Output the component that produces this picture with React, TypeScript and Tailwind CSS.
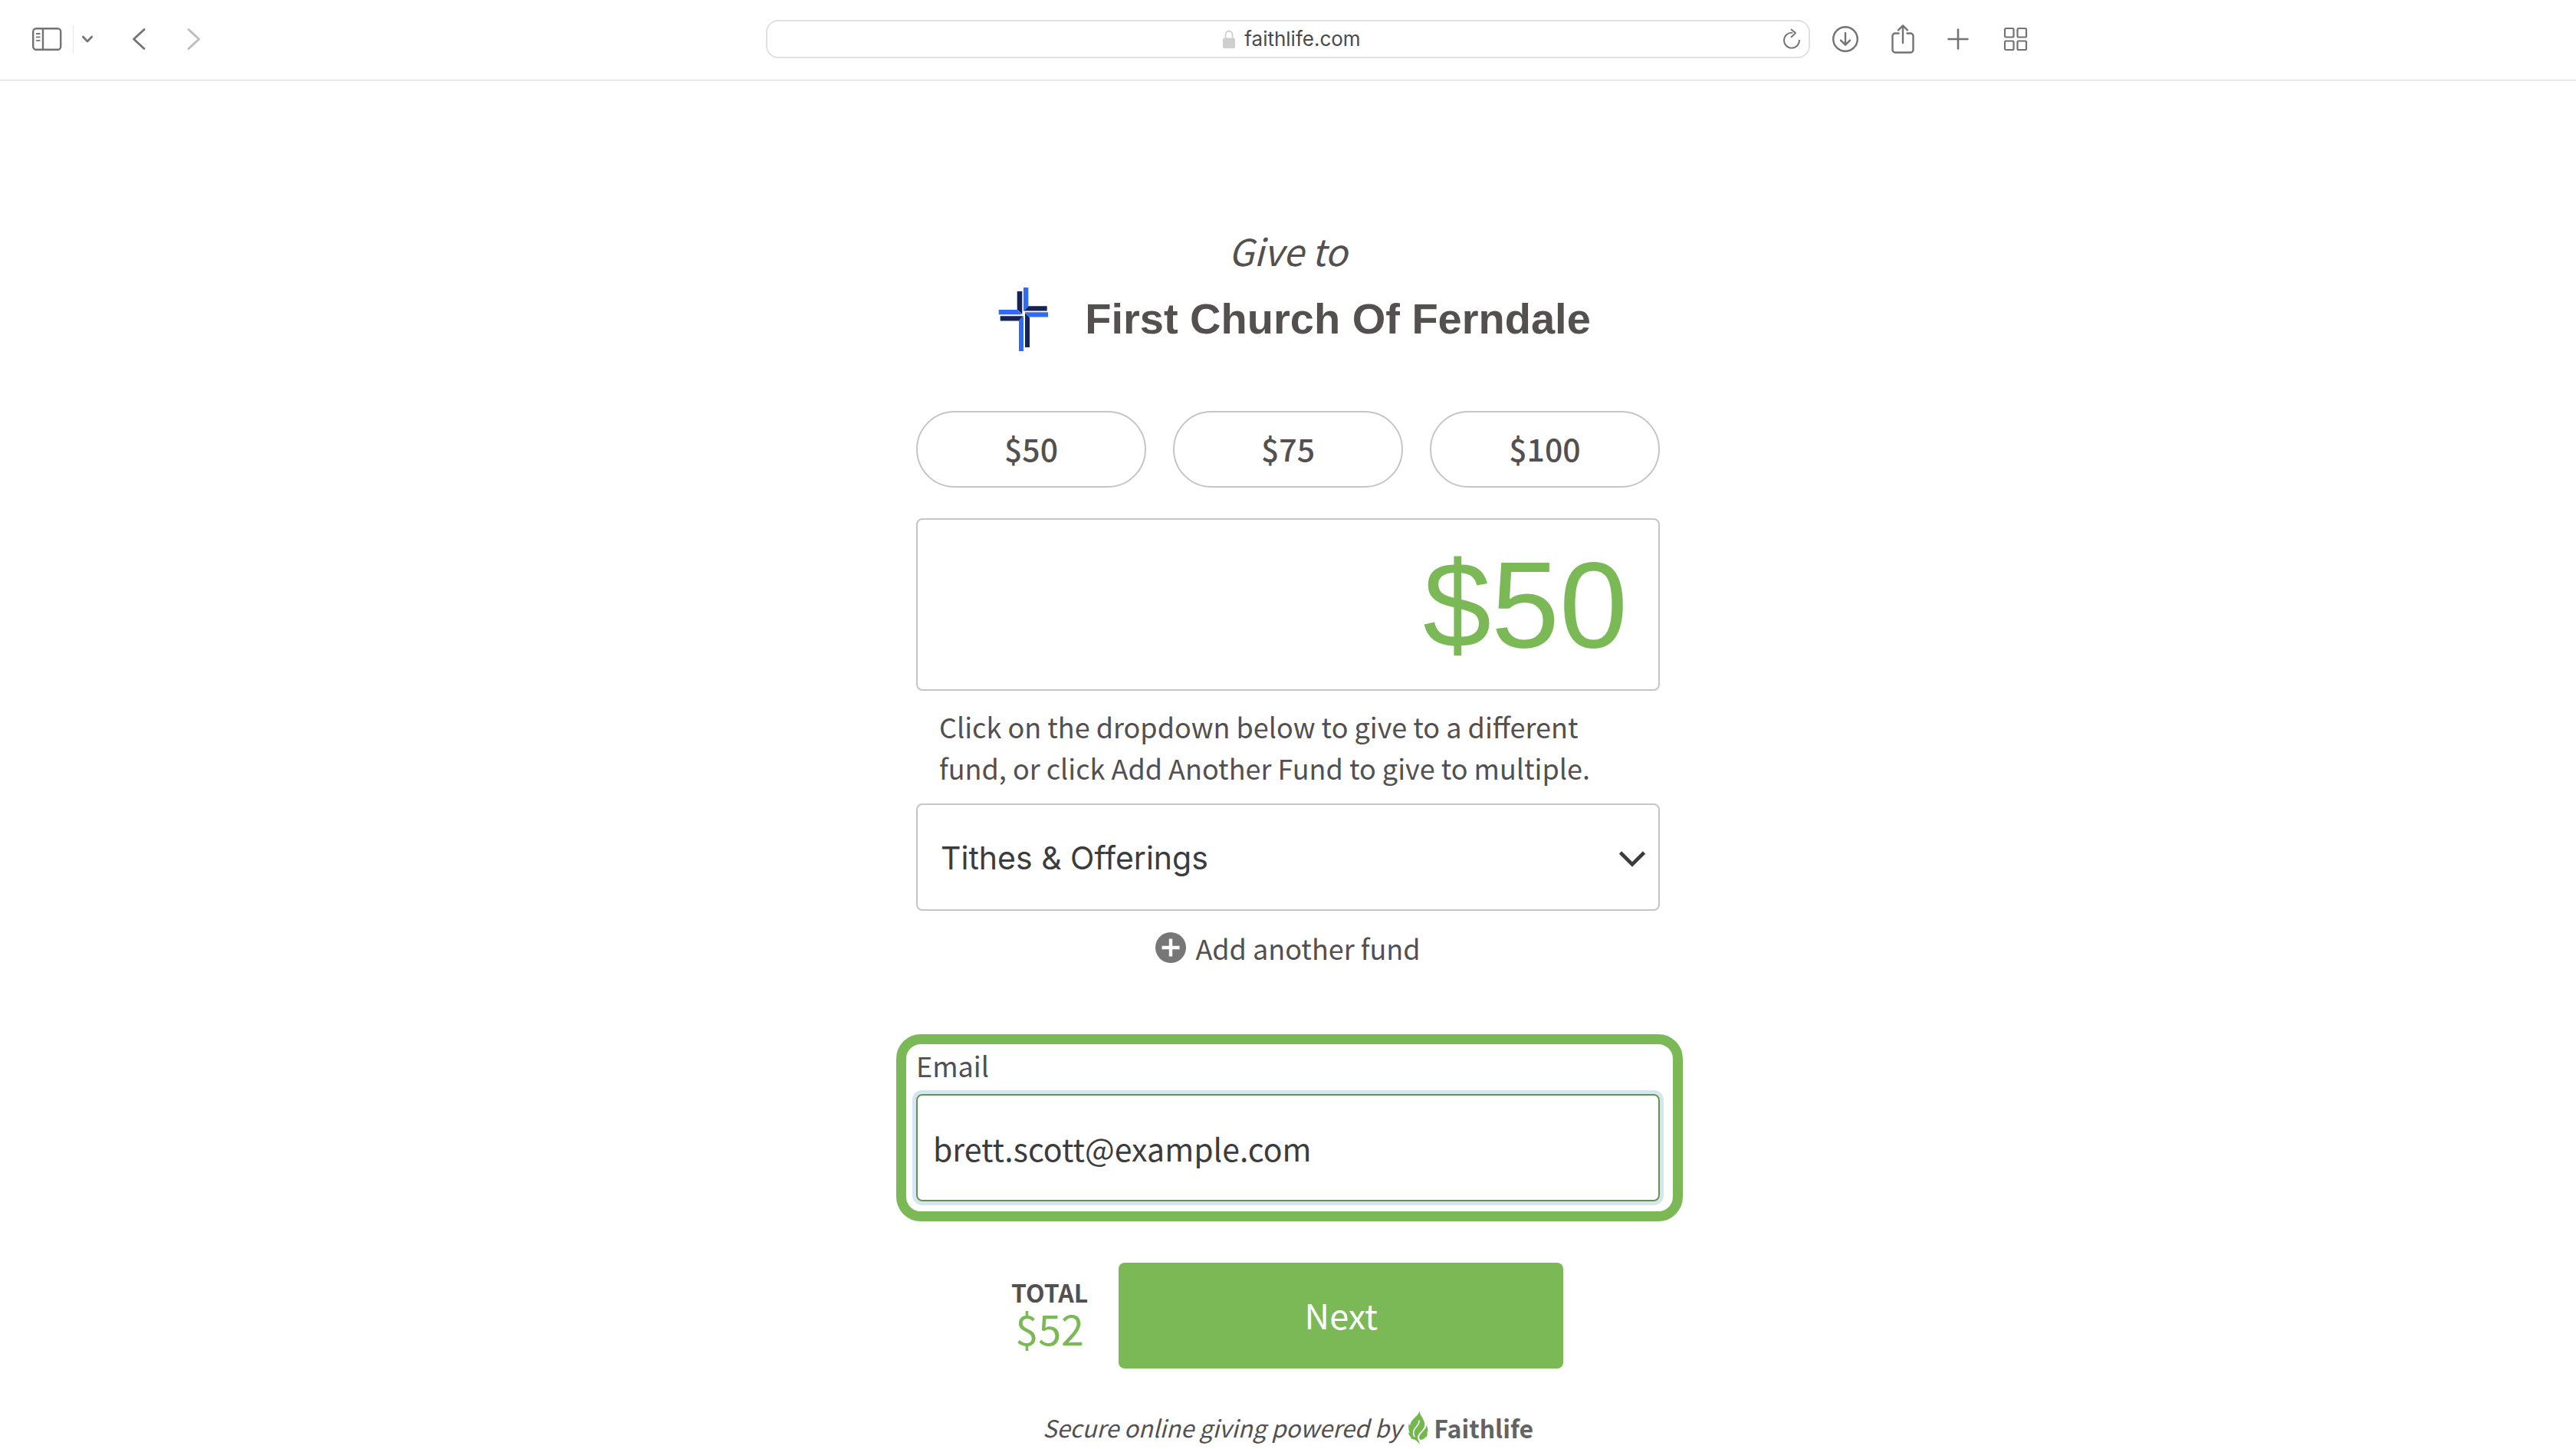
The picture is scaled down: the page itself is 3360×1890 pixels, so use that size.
import { useState } from "react";
import type { ReactNode } from "react";

const presets = ["$50", "$75", "$100"];

function ToolButton({ label, className = "", children }: { label: string; className?: string; children: ReactNode }) {
  return (
    <button type="button" aria-label={label} className={`flex shrink-0 items-center justify-center text-[#737373] ${className}`}>
      {children}
    </button>
  );
}

const stroke = {
  fill: "none",
  stroke: "currentColor",
  strokeLinecap: "round" as const,
  strokeLinejoin: "round" as const,
};

function Toolbar() {
  return (
    <header className="grid h-[105px] grid-cols-[1fr_40.54%_1fr] items-center border-b border-[#d8d8d8] pb-0.5">
      <nav aria-label="Navigation" className="flex items-center pl-[41px]">
        <ToolButton label="Show sidebar">
          <svg width="40" height="32" viewBox="0 0 40 32" {...stroke} strokeWidth="2.4">
            <rect x="2.2" y="2.2" width="36" height="27.6" rx="4" />
            <path d="M15 2.2v27.6" />
            <path d="M6.8 9h4M6.8 13.400h4M6.8 17.800h4" strokeWidth="1.8" />
          </svg>
        </ToolButton>
        <span className="ml-3.5 h-9 w-px bg-[#e6e6e6]" />
        <ToolButton label="Tab groups" className="ml-2.5">
          <svg width="16" height="12" viewBox="0 0 16 12" {...stroke} strokeWidth="2.6">
            <path d="M2.300 3l5.700 6 5.700-6" />
          </svg>
        </ToolButton>
        <ToolButton label="Back" className="ml-[50px]">
          <svg width="18" height="30" viewBox="0 0 18 30" {...stroke} strokeWidth="2.8">
            <path d="M16 2.500L2.500 15 16 27.500" />
          </svg>
        </ToolButton>
        <button type="button" aria-label="Forward" className="ml-[54px] text-[#bdbdbd]">
          <svg width="18" height="30" viewBox="0 0 18 30" {...stroke} strokeWidth="2.8">
            <path d="M2 2.500L15.500 15 2 27.500" />
          </svg>
        </button>
      </nav>

      <div className="flex h-[50px] items-center rounded-[16px] border-2 border-[#e0e0e0] pr-2.5">
        <div className="flex flex-1 items-center justify-center gap-3 pl-11">
          <svg width="16" height="24" viewBox="0 0 16 24" className="text-[#cfcfcf]">
            <path d="M3.500 11V6.500a4.500 5 0 0 1 9 0V11" fill="none" stroke="currentColor" strokeWidth="1.800" />
            <rect x="0" y="10.500" width="16" height="13.500" rx="2" fill="currentColor" />
          </svg>
          <span className="font-['Inter',sans-serif] text-[26px] leading-8 text-[#4a4a4a]">faithlife.com</span>
        </div>
        <ToolButton label="Reload">
          <svg width="24" height="28" viewBox="0 0 24 28" {...stroke} strokeWidth="1.900">
            <path d="M12.500 5.600a10 10 0 1 0 9.500 10" />
            <path d="M11.500 1.500l5.500 4.600-5.500 5.200" />
          </svg>
        </ToolButton>
      </div>

      <div className="flex items-center pl-7">
        <ToolButton label="Downloads">
          <svg width="36" height="36" viewBox="0 0 36 36" {...stroke} strokeWidth="2.400">
            <circle cx="18" cy="18" r="15.800" />
            <path d="M18 10v15.500M12 19.600l6 6 6-6" />
          </svg>
        </ToolButton>
        <ToolButton label="Share" className="ml-[41px]">
          <svg width="32" height="40" viewBox="0 0 32 40" {...stroke} strokeWidth="2.400">
            <path d="M10.500 12.500H6a3.500 3.500 0 0 0-3.500 3.500v18A3.500 3.500 0 0 0 6 37.500h20a3.500 3.500 0 0 0 3.500-3.500V16a3.500 3.500 0 0 0-3.500-3.500h-4.500" />
            <path d="M16 25V2.500M10 8.300l6-6 6 6" />
          </svg>
        </ToolButton>
        <ToolButton label="New tab" className="ml-[42px]">
          <svg width="28" height="28" viewBox="0 0 28 28" {...stroke} strokeWidth="2.600">
            <path d="M14 1.500v25M1.500 14h25" />
          </svg>
        </ToolButton>
        <ToolButton label="Tab overview" className="ml-[45px]">
          <svg width="32" height="32" viewBox="0 0 32 32" {...stroke} strokeWidth="2.200">
            <rect x="2" y="2" width="11.500" height="11.500" rx="1.500" />
            <rect x="18.500" y="2" width="11.500" height="11.500" rx="1.500" />
            <rect x="2" y="18.500" width="11.500" height="11.500" rx="1.500" />
            <rect x="18.500" y="18.500" width="11.500" height="11.500" rx="1.500" />
          </svg>
        </ToolButton>
      </div>
    </header>
  );
}

function ChurchLogo() {
  return (
    <svg width="100" height="84" viewBox="0 0 100 84" aria-hidden="true">
      <g fill="#14235a">
        <path d="M41.700 6h6.600v30l-6.600-6.300z" />
        <path d="M56.300 25.300h24.400v6.100H50.400z" />
        <path d="M52 34l6 6v39h-6z" />
        <path d="M19.700 38.300h30L44 44.600H19.700z" />
      </g>
      <g fill="#2f6bf5">
        <path d="M50 1h6.300v25L50 32z" />
        <path d="M17.700 30h24l6.300 6.300H17.700z" />
        <path d="M51.700 33.300H82v6.100H57.700z" />
        <path d="M50 38.300V84h-6V44.300z" />
      </g>
    </svg>
  );
}

function Flame() {
  return (
    <svg width="28" height="44" viewBox="0 0 28 44" aria-hidden="true" fill="#74b74f">
      <path d="M15.500 0C16 7 22.500 11 22.300 18.500c0 5-5.300 8.500-8.300 13-1.300 2.200-1.300 4.500.2 7 .8 1.500 1.300 3.500 1.500 5.500-2-3.300-4-5-6.700-6.300-2-.5-4-.7-5.300-1.700l1.300-.7C3 34 1.500 31.500 1 28.500l1.700.8C1.300 26 .8 22.500 1.500 17l1.500 2.500C4.500 13 8 10.500 11.500 7c2-2 3.500-4 4-7z" />
      <path d="M25 16c-.3 4 1.500 7 1.700 11.500l-1.200-.7c.6 3 .4 5.500-1.200 8l-1-.6c-1.300 2.800-4.300 3.800-7.300 3.600-1.800-3.300-.5-5.300 1.500-8C20.500 26 25.500 22.500 25 16z" />
      <path d="M14.800 12.500c1.500 5-4 8-6 12-1.500 3-1.500 6.500.3 9.500" fill="none" stroke="#fff" strokeWidth="1.600" />
    </svg>
  );
}

export default function App() {
  const [amount, setAmount] = useState("$50");
  const [email, setEmail] = useState("brett.scott@example.com");

  return (
    <div className="min-h-screen bg-white font-['Noto_Sans_CJK_SC',sans-serif] text-[#53504f]">
      <Toolbar />
      <main className="mx-auto flex w-[970px] max-w-full flex-col pt-[189px]">
        <p className="text-center text-[48px] leading-[64px] italic">Give to</p>
        <div className="mt-4 flex items-center justify-center gap-[30px]">
          <ChurchLogo />
          <h1 className="font-['Liberation_Sans',sans-serif] text-[56px] leading-[84px] font-bold">First Church Of Ferndale</h1>
        </div>

        <div className="mt-[78px] grid grid-cols-3 gap-[35px]">
          {presets.map((p) => (
            <button
              key={p}
              type="button"
              onClick={() => setAmount(p)}
              className="h-[100px] rounded-full border-2 border-[#c5c5c5] pb-1 text-[41px] leading-[54px] font-medium"
            >
              {p}
            </button>
          ))}
        </div>

        <input
          aria-label="Amount"
          value={amount}
          onChange={(e) => setAmount(e.target.value)}
          className="mt-10 h-[225px] w-full rounded-lg border-2 border-[#c5c5c5] px-10 text-right font-['Liberation_Sans',sans-serif] text-[160px] text-[#7bb957] outline-none"
        />

        <label htmlFor="fund" className="mt-[19px] px-[30px] text-[36px] leading-[54px]">
          Click on the dropdown below to give to a different fund, or click Add Another Fund to give to multiple.
        </label>

        <div className="mt-5 grid items-center">
          <select
            id="fund"
            className="col-start-1 row-start-1 h-[140px] w-full appearance-none rounded-lg border-2 border-[#c5c5c5] bg-transparent px-[30px] pt-1 font-['Inter',sans-serif] text-[41px] text-[#3c3c3c] outline-none"
          >
            <option>Tithes &amp; Offerings</option>
          </select>
          <svg width="36" height="24" viewBox="0 0 36 24" className="pointer-events-none col-start-1 row-start-1 mt-1 mr-[18px] justify-self-end text-[#3c3c3c]">
            <path d="M2.500 4L18 19.500 33.500 4" fill="none" stroke="currentColor" strokeWidth="4.600" />
          </svg>
        </div>

        <button type="button" className="mt-7 flex h-10 items-center gap-3 self-center text-[36px] leading-[54px]">
          <svg width="40" height="40" viewBox="0 0 40 40" aria-hidden="true">
            <circle cx="20" cy="20" r="20" fill="#777" />
            <path d="M20 8.500v23M8.500 20h23" stroke="#fff" strokeWidth="4.400" />
          </svg>
          Add another fund
        </button>

        <div className="mt-[93px] -mr-[30px] -ml-[26px] rounded-[32px] border-[13px] border-[#7bb957] pr-[17px] pb-[13px] pl-[13px]">
          <label htmlFor="email" className="block text-[36px] leading-[54px]">
            Email
          </label>
          <input
            id="email"
            type="email"
            value={email}
            onChange={(e) => setEmail(e.target.value)}
            className="mt-[11px] block h-[140px] w-full rounded-lg border-2 border-[#5f964b] px-5 text-[41px] text-[#3c3c3c] ring-[5px] ring-[#d5e5f1] outline-none"
          />
        </div>

        <div className="mt-[54px] flex items-start gap-10 pl-[124px]">
          <div className="flex flex-col items-center pt-4">
            <span className="text-[32px] leading-[44px] font-bold">TOTAL</span>
            <span className="text-[54px] leading-[50px] text-[#7bb957]">$52</span>
          </div>
          <button type="button" className="h-[138px] w-[580px] rounded-lg bg-[#7bb957] pb-0.5 text-[45px] text-white">
            Next
          </button>
        </div>

        <p className="mt-[52px] flex items-center justify-center gap-2">
          <span className="text-[31px] leading-[50px] italic">Secure online giving powered by</span>
          <a href="#faithlife" className="flex items-center gap-1.5">
            <Flame />
            <span className="text-[32px] leading-[50px] font-bold text-[#636363]">Faithlife</span>
          </a>
        </p>
      </main>
    </div>
  );
}
